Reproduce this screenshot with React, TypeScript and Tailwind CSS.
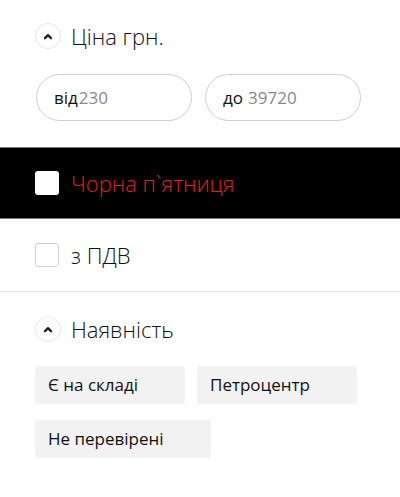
import type { ReactNode } from "react";

function Chevron() {
  return (
    <span className="flex h-[26px] w-[26px] items-center justify-center rounded-full border border-[#e8e8e8]">
      <svg width="10" height="7" viewBox="0 0 10 7" fill="none">
        <path d="M2 5.2 5 2.2l3 3" stroke="#222" strokeWidth="2.4" strokeLinecap="round" strokeLinejoin="round" />
      </svg>
    </span>
  );
}

function Heading({ children }: { children: ReactNode }) {
  return (
    <div className="flex items-center gap-[10px] pl-[35px]">
      <Chevron />
      <span className="text-[22px] font-light leading-none text-[#111]">{children}</span>
    </div>
  );
}

function Chip({ label }: { label: string }) {
  return (
    <span className="flex h-[38px] items-center rounded-[4px] bg-[#f2f2f2] pl-[13px] pr-[20px] text-[17px] text-[#111]">
      {label}
    </span>
  );
}

export default function App() {
  return (
    <main className="h-[497px] w-[400px] overflow-hidden bg-white font-['Open_Sans',sans-serif]">
      <div className="pt-[23px]">
        <Heading>Ціна грн.</Heading>
      </div>

      <div className="mt-[25px] flex gap-[13px] pl-[36px]">
        <div className="flex h-[47px] w-[156px] items-center rounded-full border border-[#cfcfcf] pl-[17px] text-[17px]">
          <span className="text-[#111]">від</span>
          <span className="ml-[1px] text-[#888]">230</span>
        </div>
        <div className="flex h-[47px] w-[156px] items-center rounded-full border border-[#cfcfcf] pl-[17px] text-[17px]">
          <span className="text-[#111]">до</span>
          <span className="ml-[5px] text-[#888]">39720</span>
        </div>
      </div>

      <div className="mt-[26px] flex h-[72px] items-center gap-[12px] border-y border-[#777] bg-black pl-[35px]">
        <span className="h-[24px] w-[24px] rounded-[3px] bg-white" />
        <span className="text-[22px] font-light text-[#e3220f]">Чорна п`ятниця</span>
      </div>

      <div className="flex h-[73px] items-center gap-[12px] border-b border-[#e6e6e6] pl-[35px]">
        <span className="h-[24px] w-[24px] rounded-[3px] border border-[#d0d0d0] bg-white" />
        <span className="text-[22px] font-light text-[#111]">з ПДВ</span>
      </div>

      <div className="pt-[24px]">
        <Heading>Наявність</Heading>
      </div>

      <div className="mt-[24px] flex flex-wrap gap-x-[12px] gap-y-[16px] pl-[35px] pr-[40px]">
        <div className="w-[150px]">
          <Chip label="Є на складі" />
        </div>
        <div className="w-[160px]">
          <Chip label="Петроцентр" />
        </div>
        <div className="w-[176px]">
          <Chip label="Не перевірені" />
        </div>
      </div>
    </main>
  );
}
